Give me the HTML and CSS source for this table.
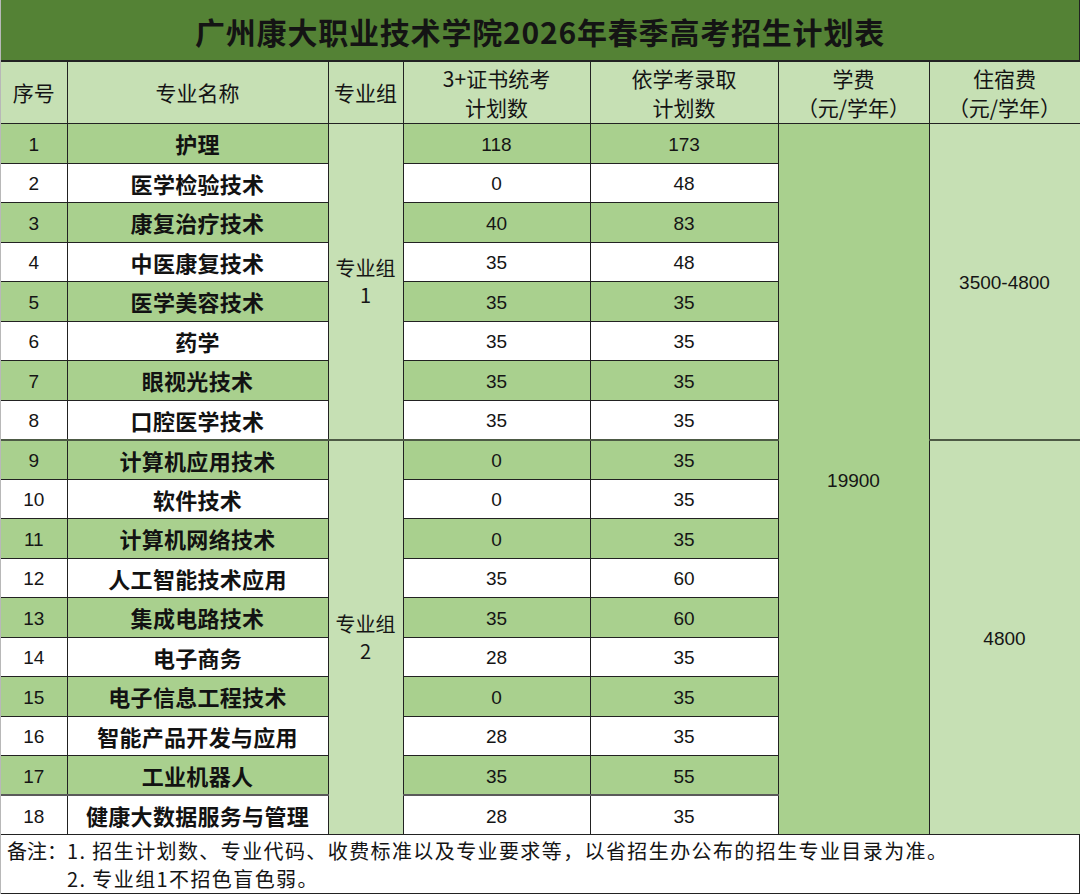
FILE: index.html
```html
<!DOCTYPE html>
<html lang="zh-CN">
<head>
<meta charset="utf-8">
<title>广州康大职业技术学院2026年春季高考招生计划表</title>
<link rel="stylesheet" href="styles.css">
</head>
<body>
<div class="sheet">
  <div class="title">广州康大职业技术学院2026年春季高考招生计划表</div>
  <table class="plan">
    <colgroup>
      <col class="c1"><col class="c2"><col class="c3"><col class="c4"><col class="c5"><col class="c6"><col class="c7">
    </colgroup>
    <thead>
      <tr class="head">
        <th>序号</th>
        <th>专业名称</th>
        <th>专业组</th>
        <th>3+证书统考<br>计划数</th>
        <th>依学考录取<br>计划数</th>
        <th>学费<br>（元/学年）</th>
        <th>住宿费<br>（元/学年）</th>
      </tr>
    </thead>
    <tbody>
      <tr class="g"><td class="num">1</td><td class="name">护理</td><td class="grp" rowspan="8">专业组<br>1</td><td class="num">118</td><td class="num">173</td><td class="fee num" rowspan="18">19900</td><td class="dorm num" rowspan="8">3500-4800</td></tr>
      <tr><td class="num">2</td><td class="name">医学检验技术</td><td class="num">0</td><td class="num">48</td></tr>
      <tr class="g"><td class="num">3</td><td class="name">康复治疗技术</td><td class="num">40</td><td class="num">83</td></tr>
      <tr><td class="num">4</td><td class="name">中医康复技术</td><td class="num">35</td><td class="num">48</td></tr>
      <tr class="g"><td class="num">5</td><td class="name">医学美容技术</td><td class="num">35</td><td class="num">35</td></tr>
      <tr><td class="num">6</td><td class="name">药学</td><td class="num">35</td><td class="num">35</td></tr>
      <tr class="g"><td class="num">7</td><td class="name">眼视光技术</td><td class="num">35</td><td class="num">35</td></tr>
      <tr><td class="num">8</td><td class="name">口腔医学技术</td><td class="num">35</td><td class="num">35</td></tr>
      <tr class="g split"><td class="num">9</td><td class="name">计算机应用技术</td><td class="grp" rowspan="10">专业组<br>2</td><td class="num">0</td><td class="num">35</td><td class="dorm num" rowspan="10">4800</td></tr>
      <tr><td class="num">10</td><td class="name">软件技术</td><td class="num">0</td><td class="num">35</td></tr>
      <tr class="g"><td class="num">11</td><td class="name">计算机网络技术</td><td class="num">0</td><td class="num">35</td></tr>
      <tr><td class="num">12</td><td class="name">人工智能技术应用</td><td class="num">35</td><td class="num">60</td></tr>
      <tr class="g"><td class="num">13</td><td class="name">集成电路技术</td><td class="num">35</td><td class="num">60</td></tr>
      <tr><td class="num">14</td><td class="name">电子商务</td><td class="num">28</td><td class="num">35</td></tr>
      <tr class="g"><td class="num">15</td><td class="name">电子信息工程技术</td><td class="num">0</td><td class="num">35</td></tr>
      <tr><td class="num">16</td><td class="name">智能产品开发与应用</td><td class="num">28</td><td class="num">35</td></tr>
      <tr class="g"><td class="num">17</td><td class="name">工业机器人</td><td class="num">35</td><td class="num">55</td></tr>
      <tr class="last"><td class="num">18</td><td class="name">健康大数据服务与管理</td><td class="num">28</td><td class="num">35</td></tr>
    </tbody>
  </table>
  <div class="notes">
    <div class="label">备注：</div>
    <div class="items">
      <p>1. 招生计划数、专业代码、收费标准以及专业要求等，以省招生办公布的招生专业目录为准。</p>
      <p>2. 专业组1不招色盲色弱。</p>
    </div>
  </div>
</div>
</body>
</html>
```

FILE: styles.css
```css
* { box-sizing: border-box; }

html, body {
  margin: 0;
  padding: 0;
  background: #ffffff;
}

body {
  font-family: "Noto Sans CJK SC", "Noto Sans", sans-serif;
  color: #111111;
}

.sheet {
  width: 1080px;
  border-left: 1px solid #b8b8b8;
}

.title {
  height: 61px;
  background: #548235;
  border-bottom: 1px solid #222222;
  border-right: 1px solid #222222;
  display: flex;
  align-items: center;
  justify-content: center;
  font-size: 30px;
  font-weight: 700;
  letter-spacing: 0.8px;
  color: #141414;
  padding-top: 2px;
}

.plan {
  width: 1079px;
  border-collapse: collapse;
  table-layout: fixed;
}

.c1 { width: 66px; }
.c2 { width: 261px; }
.c3 { width: 75px; }
.c4 { width: 187px; }
.c5 { width: 188px; }
.c6 { width: 151px; }
.c7 { width: 151px; }

.plan th,
.plan td {
  border: 1px solid #222222;
  padding: 0;
  text-align: center;
  vertical-align: middle;
}

.plan tr:first-child th:first-child,
.plan tbody tr td:first-child {
  border-left: none;
}

.head {
  height: 62px;
  background: #c6e0b4;
}

.head th {
  font-size: 21px;
  font-weight: 400;
  line-height: 29px;
  color: #141414;
}

.plan tbody tr {
  height: 39.5px;
  background: #ffffff;
}

.plan tbody tr.g {
  background: #a9d08e;
}

.plan td.num {
  font-family: "Liberation Sans", Arial, sans-serif;
  font-size: 19px;
  color: #151515;
  padding-top: 3px;
}

.name {
  font-size: 22px;
  font-weight: 700;
  letter-spacing: 0.3px;
  color: #121212;
}

.grp {
  background: #c6e0b4;
  font-size: 20px;
  line-height: 27px;
  color: #151515;
}

.fee {
  background: #a9d08e;
}

.dorm {
  background: #c6e0b4;
}

.plan tbody tr.split td {
  border-top: 2px solid #4d5a45;
}

.plan tbody tr.last td {
  border-top: 2px solid #5a5a5a;
}

.notes {
  display: flex;
  height: 59px;
  border-right: 1px solid #222222;
  border-bottom: 1px solid #222222;
  padding: 2px 0 0 6px;
  font-size: 20px;
  line-height: 28px;
  color: #141414;
}

.notes .label {
  flex: none;
}

.notes .items {
  letter-spacing: 1.4px;
}

.notes .items p {
  margin: 0;
}
```
